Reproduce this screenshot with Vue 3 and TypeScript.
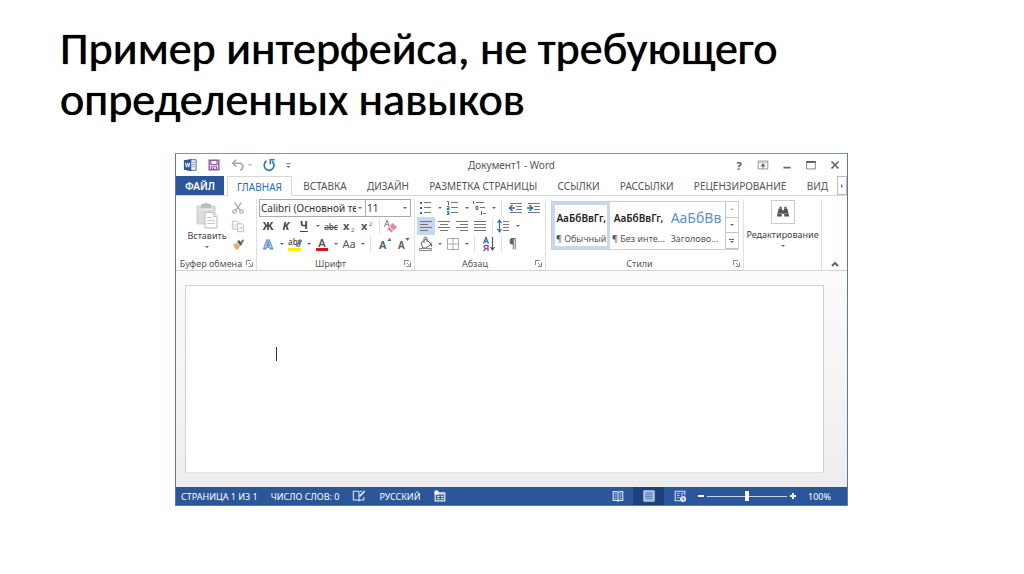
<script setup lang="ts">
import { ref } from 'vue'

interface Tool {
  kind: 'tool' | 'caret' | 'sep' | 'space'
  label?: string
  icon?: string
  active?: boolean
}

const tool = (icon: string, label: string, active = false): Tool => ({ kind: 'tool', icon, label, active })
const caret = (label: string): Tool => ({ kind: 'caret', label })
const sep: Tool = { kind: 'sep' }
const space: Tool = { kind: 'space' }

const lines = (rows: number[][], color = '#777') =>
  rows.map(([x, y, w]) => `<path d="M${x} ${y}.5h${w}" stroke="${color}"/>`).join('')

const icons: Record<string, string> = {
  word: '<path d="M8 2h7v12H8z" fill="#fff" stroke="#2b579a"/><path d="M10 5h4M10 7.5h4M10 10h4" stroke="#6f8fc0"/><path d="M1 2.5 9.500 1v14L1 13.500z" fill="#2b579a"/><path d="m2.800 5.500 1.200 5 1.300-5 1.300 5 1.200-5" fill="none" stroke="#fff" stroke-width="1.100"/>',
  save: '<path d="M2.500 2.500h11v11h-11z" fill="#fff" stroke="#8f5aa8" stroke-width="1.600"/><path d="M4.500 2.500v5h7v-5M5 13.500v-3.500h6v3.500" fill="none" stroke="#8f5aa8" stroke-width="1.400"/><path d="M6.500 11h2v2.500h-2z" fill="#8f5aa8"/>',
  undo: '<path d="M6 2 2 6l4 4M2.500 6H9.500c5 0 5.500 6 1 8" fill="none" stroke="#a9a9a9" stroke-width="1.900"/>',
  redo: '<path d="M5.500 3.500A5.600 5.600 0 1 0 11.500 4" fill="none" stroke="#3478b8" stroke-width="2"/><path d="M9.500 7V2h5" fill="none" stroke="#3478b8" stroke-width="1.900"/>',
  quick: '<path d="M6 6.500h5" stroke="#777" stroke-width="1.200"/><path d="M6 9h5l-2.500 2.500z" fill="#777"/>',
  ribbon: '<path d="M2.500 3.500h11v9h-11z" fill="none" stroke="#888"/><path d="M3 5.500h10" stroke="#aaa"/><path d="M8 12V7M5.700 9.500 8 7 10.300 9.500" fill="none" stroke="#666" stroke-width="1.300"/>',
  minimize: '<path d="M4 11h8" stroke="#666" stroke-width="2"/>',
  maximize: '<path d="M3 4.500h10v8H3z" fill="none" stroke="#777"/><path d="M2.500 4.500h11" stroke="#555" stroke-width="2"/>',
  close: '<path d="m4 4 8 8m0-8-8 8" stroke="#666" stroke-width="2"/>',
  paste: '<path d="M2 4h18v18H2z" fill="#dcdcdc" stroke="#cdcdcd"/><path d="M6 4V2h3q2-3 4 0h3v4H6z" fill="#bdbdbd"/><path d="M4 7.500h14" stroke="#eee"/><path d="M10 10.500h8l4 4V26H10z" fill="#fff" stroke="#bbb"/><path d="M18 10.500v4h4M12 15.500h5M12 18.500h8M12 21.500h8" fill="none" stroke="#c8c8c8"/>',
  cut: '<path d="M4 1.500 10.500 11M12 1.500 5.500 11" stroke="#a8a8a8" stroke-width="1.400"/><circle cx="4" cy="12" r="2" fill="none" stroke="#a8a8a8" stroke-width="1.300"/><circle cx="12" cy="12" r="2" fill="none" stroke="#a8a8a8" stroke-width="1.300"/>',
  copy: '<path d="M1.500 2.500h5l2 2v7h-7z" fill="#fff" stroke="#b5b5b5"/><path d="M7.500 5.500h5l2 2v7h-7z" fill="#fff" stroke="#b5b5b5"/><path d="M3 6.500h3M3 8.500h3M9.500 9.500H13M9.500 11.500H13" stroke="#c5c5c5"/>',
  painter: '<path d="m2 9 5-3 4 4-4 5-2-1.500z" fill="#edbd75"/><path d="m7 5 2-1.500 4 4L11 10z" fill="#555"/><path d="m11 5 2.500-2.500 1.500 1.500L13 7z" fill="#777"/><path d="m3.500 9.500 3.500 4M5.500 8.500l3 3.500" stroke="#d3944d"/>',
  bold: '<text x="8" y="12" text-anchor="middle" font-size="11" font-weight="700" fill="#444">Ж</text>',
  italic: '<text x="8" y="12" text-anchor="middle" font-size="11" font-weight="700" font-style="italic" fill="#444">К</text>',
  underline: '<text x="8" y="11" text-anchor="middle" font-size="11" font-weight="700" fill="#444">Ч</text><path d="M4 13.500h8" stroke="#444"/>',
  strike: '<text x="8" y="12" text-anchor="middle" font-size="8" font-weight="600" fill="#555">abc</text><path d="M1 9.500h14" stroke="#555"/>',
  sub: '<text x="2" y="12" font-size="11" font-weight="700" fill="#555">x</text><text x="10" y="14" font-size="6" fill="#3b6fb0">2</text>',
  sup: '<text x="2" y="12" font-size="11" font-weight="700" fill="#555">x</text><text x="10" y="8" font-size="6" fill="#3b6fb0">2</text>',
  eraser: '<text x="1" y="9" font-size="9" fill="#666">A</text><path d="m4 11 5.500-6 4.500 4-5.500 5.500z" fill="#e58a9a"/><path d="m6 8.500 5 4.500" stroke="#fff"/>',
  effects: '<text x="8" y="13" text-anchor="middle" font-size="13" font-weight="700" fill="#fff" stroke="#3c80c4" stroke-width="1">A</text>',
  marker: '<text x="1" y="9" font-size="8" font-weight="600" fill="#555">aby</text><path d="m9 9 4-6 1.500 1-4 6-2 1z" fill="#777"/><path d="M1 12h13v3H1z" fill="#fff200"/>',
  color: '<text x="8" y="11" text-anchor="middle" font-size="11" font-weight="600" fill="#555">A</text><path d="M2 12h12v3H2z" fill="#d8141c"/>',
  letterCase: '<text x="8" y="12" text-anchor="middle" font-size="11" fill="#555">Aa</text>',
  grow: '<text x="2" y="13" font-size="11" font-weight="600" fill="#555">A</text><path d="m10.500 5 2-3 2 3z" fill="#2d6fb5"/>',
  shrink: '<text x="3" y="13" font-size="10" font-weight="600" fill="#555">A</text><path d="m10.500 2 2 3 2-3z" fill="#2d6fb5"/>',
  bullets: '<path d="M2 2h2v2H2zM2 7h2v2H2zM2 12h2v2H2z" fill="#2d6fb5"/>' + lines([[6, 2, 7], [6, 7, 7], [6, 12, 7]]),
  numbers: '<path d="M2 1.500h1.500V5M2 6.500h2v2H2v1h2.500M2 11.500h2v3H2m0-1.500h2" fill="none" stroke="#2d6fb5"/>' + lines([[6, 2, 7], [6, 7, 7], [6, 12, 7]]),
  multi: '<path d="M1.500 1v3M4 6.500h2v3H4zM9.500 11v4" fill="none" stroke="#2d6fb5"/>' + lines([[4, 2, 8], [8, 7, 5], [11, 13, 3]]),
  outdent: lines([[2, 3, 12], [8, 6, 6], [8, 9, 6], [2, 12, 12]]) + '<path d="M7 8H2M4.500 5 1.500 8l3 3" fill="none" stroke="#2d6fb5" stroke-width="1.600"/>',
  indent: lines([[2, 3, 12], [8, 6, 6], [8, 9, 6], [2, 12, 12]]) + '<path d="M1 8h5M3.500 5l3 3-3 3" fill="none" stroke="#2d6fb5" stroke-width="1.600"/>',
  left: lines([[2, 3, 12], [2, 6, 8], [2, 9, 12], [2, 12, 8]]),
  center: lines([[2, 3, 12], [4, 6, 8], [2, 9, 12], [4, 12, 8]]),
  right: lines([[2, 3, 12], [6, 6, 8], [2, 9, 12], [6, 12, 8]]),
  justify: lines([[2, 3, 12], [2, 6, 12], [2, 9, 12], [2, 12, 12]]),
  spacing: '<path d="M3.500 2v12M1.500 5l2-3 2 3m-4 6 2 3 2-3" fill="none" stroke="#2d6fb5" stroke-width="1.200"/>' + lines([[7, 3, 6], [7, 6, 6], [7, 9, 6], [7, 12, 6]]),
  bucket: '<path d="m3 7 5-4 5 5-5 4H5z" fill="#fff" stroke="#666"/><path d="M6 7V2q2-2 3 0v4" fill="none" stroke="#666"/><path d="M12 6q3 2 2 5-2-1-2-5" fill="#2d6fb5"/><path d="M1.500 12.500h12v2h-12z" fill="#fff" stroke="#888"/>',
  borders: '<path d="M2.500 2.500h11v11h-11zM8 2.500v11M2.500 8h11" fill="none" stroke="#aaa"/>',
  sort: '<path d="M2.500 7.500 5 1.500l2.500 6M3.500 5.500h3" fill="none" stroke="#2d6fb5" stroke-width="1.300"/><path d="M7 15V9.500H5q-2 0-2 1.500t2 1.500h2M5 12.500 2.500 15" fill="none" stroke="#8f4aa0" stroke-width="1.300"/><path d="M11.500 1v13M9.500 11l2 3 2-3" fill="none" stroke="#555" stroke-width="1.200"/>',
  pilcrow: '<text x="8" y="12" text-anchor="middle" font-size="12" font-weight="600" fill="#666">¶</text>',
  find: '<path d="M3 4h4v2h2V4h4l2 9H9.500v-3h-3v3H1z" fill="#555"/><path d="M4 2h2.500v2H4zM9.500 2H12v2H9.500z" fill="#555"/><path d="M3 9.500h3M10 9.500h3" stroke="#aaa"/>',
  launcher: '<path d="M2.500 7V2.500H7M5 5l2.500 2.500M8.500 4.500v4h-4" fill="none" stroke="#888"/>',
  proof: '<path d="M1.500 2.500h5l1.500 1 1.500-1h2M1.500 2.500v10h5l1.500 1 1.500-1h4V9M8 3.500v10" fill="none" stroke="#dce6f4" stroke-width="1.200"/><path d="m8.500 8.500 6-6" stroke="#dce6f4" stroke-width="2"/>',
  macro: '<path d="M2.500 5.500h11v8h-11z" fill="none" stroke="#e6edf7" stroke-width="1.300"/><path d="M3 4.500h11M4.500 8.500h3M9 8.500h3M4.500 11h3M9 11h3" stroke="#e6edf7" stroke-width="1.400"/><circle cx="4" cy="4" r="2.600" fill="#fff"/>',
  read: '<path d="M2.500 3h4L8 4l1.500-1h4v10h-4L8 14l-1.500-1h-4zM8 4v9.500" fill="none" stroke="#dce6f4" stroke-width="1.200"/><path d="M4 5.500h2.500M4 8h2.500M4 10.500h2.500M9.500 5.500H12M9.500 8H12M9.500 10.500H12" stroke="#dce6f4"/>',
  print: '<path d="M2 2h12v12H2z" fill="#9fb6d9" stroke="#c7d5ea"/><path d="M4 4.500h8M4 6.500h8M4 8.500h8M4 10.500h8" stroke="#5c7fb5"/>',
  web: '<path d="M13.500 7V2.500h-11v11h6" fill="none" stroke="#dce6f4" stroke-width="1.200"/><path d="M4.500 5h3M4.500 7.500h3M4.500 10h3M9 5h3M9 7h2" stroke="#dce6f4"/><circle cx="11.500" cy="11.500" r="3.500" fill="#dce6f4"/><path d="m10 10 2 1v2" fill="none" stroke="#2b579a"/>',
}

const tabs = ['ГЛАВНАЯ', 'ВСТАВКА', 'ДИЗАЙН', 'РАЗМЕТКА СТРАНИЦЫ', 'ССЫЛКИ', 'РАССЫЛКИ', 'РЕЦЕНЗИРОВАНИЕ', 'ВИД']
const activeTab = ref('ГЛАВНАЯ')

const fontRows: Tool[][] = [
  [
    tool('bold', 'Полужирный'), tool('italic', 'Курсив'), tool('underline', 'Подчеркнутый'), caret('Вид подчеркивания'),
    tool('strike', 'Зачеркнутый'), tool('sub', 'Подстрочный'), tool('sup', 'Надстрочный'), sep, tool('eraser', 'Очистить формат'),
  ],
  [
    tool('effects', 'Эффекты'), caret('Виды эффектов'), tool('marker', 'Выделение'), caret('Цвет выделения'),
    tool('color', 'Цвет шрифта'), caret('Выбор цвета'), tool('letterCase', 'Регистр'), caret('Выбор регистра'), sep,
    space, tool('grow', 'Увеличить размер'), tool('shrink', 'Уменьшить размер'),
  ],
]

const paragraphRows: Tool[][] = [
  [
    tool('bullets', 'Маркеры'), caret('Вид маркеров'), tool('numbers', 'Нумерация'), caret('Вид нумерации'),
    tool('multi', 'Многоуровневый список'), caret('Вид списка'), sep, space, tool('outdent', 'Уменьшить отступ'), tool('indent', 'Увеличить отступ'),
  ],
  [
    tool('left', 'По левому краю', true), tool('center', 'По центру'), tool('right', 'По правому краю'), tool('justify', 'По ширине'),
    sep, tool('spacing', 'Интервал'), caret('Выбор интервала'),
  ],
  [
    tool('bucket', 'Заливка'), caret('Цвет заливки'), tool('borders', 'Границы'), caret('Вид границ'),
    sep, space, tool('sort', 'Сортировка'), sep, tool('pilcrow', 'Отобразить все знаки'),
  ],
]

const styles = [
  { sample: 'АаБбВвГг,', name: '¶ Обычный', heading: false },
  { sample: 'АаБбВвГг,', name: '¶ Без инте...', heading: false },
  { sample: 'АаБбВв', name: 'Заголово...', heading: true },
]
const activeStyle = ref(0)
const fontName = ref('Calibri (Основной текст)')
const fontSize = ref('11')
const zoom = ref(50)
</script>

<template>
  <main class="slide">
    <h1>Пример интерфейса, не требующего<br>определенных навыков</h1>

    <section class="window" aria-label="Документ1 - Word">
      <header class="titlebar">
        <div class="quick">
          <button aria-label="Word"><svg class="ic" viewBox="0 0 16 16" v-html="icons.word" /></button>
          <button aria-label="Сохранить"><svg class="ic" viewBox="0 0 16 16" v-html="icons.save" /></button>
          <div class="pair">
            <button aria-label="Отменить"><svg class="ic" viewBox="0 0 16 16" v-html="icons.undo" /></button>
            <button class="caret pale" aria-label="История отмены"><i /></button>
          </div>
          <button aria-label="Повторить"><svg class="ic" viewBox="0 0 16 16" v-html="icons.redo" /></button>
          <button aria-label="Настройка панели"><svg class="ic" viewBox="0 0 16 16" v-html="icons.quick" /></button>
        </div>
        <span class="caption">Документ1 - Word</span>
        <div class="controls">
          <button class="help" aria-label="Справка">?</button>
          <button aria-label="Параметры ленты"><svg class="ic" viewBox="0 0 16 16" v-html="icons.ribbon" /></button>
          <button aria-label="Свернуть"><svg class="ic" viewBox="0 0 16 16" v-html="icons.minimize" /></button>
          <button aria-label="Развернуть"><svg class="ic" viewBox="0 0 16 16" v-html="icons.maximize" /></button>
          <button aria-label="Закрыть"><svg class="ic" viewBox="0 0 16 16" v-html="icons.close" /></button>
        </div>
      </header>

      <nav class="tabs">
        <button class="file">ФАЙЛ</button>
        <div class="tablist">
          <button
            v-for="t in tabs" :key="t" class="tab" :class="{ current: t === activeTab }"
            @click="activeTab = t"
          >{{ t }}</button>
        </div>
        <button class="more" aria-label="Другие вкладки"><i /></button>
      </nav>

      <div class="ribbon">
        <section class="group">
          <div class="body clipboard">
            <button class="paste">
              <svg class="big" viewBox="0 0 24 27" v-html="icons.paste" />
              <span>Вставить</span>
              <i class="arrow" />
            </button>
            <div class="stack">
              <button class="tool" aria-label="Вырезать"><svg class="ic" viewBox="0 0 16 16" v-html="icons.cut" /></button>
              <button class="tool" aria-label="Копировать"><svg class="ic" viewBox="0 0 16 16" v-html="icons.copy" /></button>
              <button class="tool" aria-label="Формат по образцу"><svg class="ic" viewBox="0 0 16 16" v-html="icons.painter" /></button>
            </div>
          </div>
          <footer><span>Буфер обмена</span><button aria-label="Буфер обмена: параметры"><svg viewBox="0 0 10 10" v-html="icons.launcher" /></button></footer>
        </section>

        <section class="group">
          <div class="body rows">
            <div class="fields">
              <label class="field name">
                <select v-model="fontName" aria-label="Шрифт"><option>Calibri (Основной текст)</option></select>
                <i class="arrow" />
              </label>
              <label class="field size">
                <select v-model="fontSize" aria-label="Размер шрифта"><option>11</option><option>12</option></select>
                <i class="arrow" />
              </label>
            </div>
            <div v-for="(row, r) in fontRows" :key="r" class="row">
              <template v-for="(item, i) in row" :key="i">
                <button v-if="item.kind === 'tool'" class="tool" :aria-label="item.label">
                  <svg class="ic" viewBox="0 0 16 16" v-html="icons[item.icon!]" />
                </button>
                <button v-else-if="item.kind === 'caret'" class="caret" :aria-label="item.label"><i /></button>
                <span v-else :class="item.kind" />
              </template>
            </div>
          </div>
          <footer><span>Шрифт</span><button aria-label="Шрифт: параметры"><svg viewBox="0 0 10 10" v-html="icons.launcher" /></button></footer>
        </section>

        <section class="group">
          <div class="body rows">
            <div v-for="(row, r) in paragraphRows" :key="r" class="row">
              <template v-for="(item, i) in row" :key="i">
                <button v-if="item.kind === 'tool'" class="tool" :class="{ pressed: item.active }" :aria-label="item.label">
                  <svg class="ic" viewBox="0 0 16 16" v-html="icons[item.icon!]" />
                </button>
                <button v-else-if="item.kind === 'caret'" class="caret" :aria-label="item.label"><i /></button>
                <span v-else :class="item.kind" />
              </template>
            </div>
          </div>
          <footer><span>Абзац</span><button aria-label="Абзац: параметры"><svg viewBox="0 0 10 10" v-html="icons.launcher" /></button></footer>
        </section>

        <section class="group">
          <div class="body gallery-wrap">
            <div class="gallery">
              <button
                v-for="(s, i) in styles" :key="i" class="card" :class="{ chosen: i === activeStyle, heading: s.heading }"
                @click="activeStyle = i"
              >
                <span class="sample">{{ s.sample }}</span>
                <span class="label">{{ s.name }}</span>
              </button>
              <div class="scroller">
                <button class="up" aria-label="Вверх"><i class="arrow" /></button>
                <button aria-label="Вниз"><i class="arrow" /></button>
                <button class="all" aria-label="Все стили"><i class="arrow" /></button>
              </div>
            </div>
          </div>
          <footer><span>Стили</span><button aria-label="Стили: параметры"><svg viewBox="0 0 10 10" v-html="icons.launcher" /></button></footer>
        </section>

        <section class="group">
          <button class="body editing">
            <span class="find"><svg class="ic" viewBox="0 0 16 16" v-html="icons.find" /></span>
            <span>Редактирование</span>
            <i class="arrow" />
          </button>
        </section>

        <div class="collapse">
          <button aria-label="Свернуть ленту">
            <svg viewBox="0 0 10 10"><path d="m2 7 3-3 3 3" fill="none" stroke="#666" stroke-width="2" /></svg>
          </button>
        </div>
      </div>

      <div class="workspace">
        <div class="page"><span class="cursor" /></div>
      </div>

      <footer class="status">
        <button>СТРАНИЦА 1 ИЗ 1</button>
        <button>ЧИСЛО СЛОВ: 0</button>
        <button aria-label="Правописание"><svg class="ic" viewBox="0 0 16 16" v-html="icons.proof" /></button>
        <button>РУССКИЙ</button>
        <button aria-label="Запись макроса"><svg class="ic" viewBox="0 0 16 16" v-html="icons.macro" /></button>
        <div class="views">
          <button class="view" aria-label="Режим чтения"><svg class="ic" viewBox="0 0 16 16" v-html="icons.read" /></button>
          <button class="view on" aria-label="Разметка страницы"><svg class="ic" viewBox="0 0 16 16" v-html="icons.print" /></button>
          <button class="view" aria-label="Веб-документ"><svg class="ic" viewBox="0 0 16 16" v-html="icons.web" /></button>
          <button class="step" aria-label="Уменьшить"><svg viewBox="0 0 10 10"><path d="M2 5h6" stroke="#fff" stroke-width="2" /></svg></button>
          <input v-model="zoom" type="range" min="0" max="100" aria-label="Масштаб">
          <button class="step" aria-label="Увеличить"><svg viewBox="0 0 10 10"><path d="M2 5h6M5 2v6" stroke="#fff" stroke-width="2" /></svg></button>
          <button class="percent">100%</button>
        </div>
      </footer>
    </section>
  </main>
</template>

<style>
body {
  background: #fff;
}
</style>

<style scoped>
* {
  box-sizing: border-box;
}

.slide {
  padding: 23px 176px 24px 175px;
  font-family: "Noto Sans", "Open Sans", sans-serif;
  font-size: 9px;
  color: #555;
}

h1 {
  margin: 0 -100px 28px -115px;
  font: 400 46px/51px Carlito, Calibri, "Noto Sans", sans-serif;
  color: #000;
  white-space: nowrap;
  text-shadow: 0 0 1px #000;
}

button {
  display: flex;
  align-items: center;
  justify-content: center;
  margin: 0;
  padding: 0;
  border: 0;
  background: none;
  font: inherit;
  color: inherit;
  white-space: nowrap;
}

svg {
  display: block;
  flex: none;
  width: 10px;
  height: 10px;
}

.ic {
  width: 14px;
  height: 14px;
}

.window {
  border: 1px solid #5a78ae;
  border-top-color: #7f92b5;
  background: #fff;
}

.titlebar {
  display: grid;
  grid-template-columns: 1fr auto 1fr;
  align-items: center;
  height: 22px;
}

.quick {
  display: flex;
  gap: 10px;
  padding-left: 7px;
}

.pair {
  display: flex;
}

.pair + button {
  margin-left: -2px;
}

.quick > :last-child {
  margin-left: -5px;
}

.caption {
  font-size: 10px;
}

.controls {
  display: flex;
  justify-content: flex-end;
  gap: 10px;
  padding-right: 5px;
}

.help {
  width: 14px;
  font-size: 11px;
  font-weight: 700;
}

.tabs {
  display: flex;
  height: 20px;
  border-bottom: 1px solid #d8d8d8;
  font-size: 10px;
}

.file {
  width: 48px;
  background: #2b579a;
  color: #fff;
  font-weight: 600;
}

.tablist {
  display: flex;
  flex: 1;
  justify-content: space-between;
  margin-left: 3px;
}

.tab {
  padding: 0 9px;
}

.current {
  margin-bottom: -1px;
  border: 1px solid #d8d8d8;
  border-bottom: 0;
  background: #fff;
  color: #2b6cb0;
}

.more {
  width: 10px;
  border: 1px solid #bbb;
}

.more i {
  border: 2px solid transparent;
  border-left-color: #666;
  border-right: 0;
}

.ribbon {
  display: grid;
  grid-template-columns: 81px 158px 131px 1fr 78px 25px;
  height: 75px;
  padding: 3px 0 1px;
  border-bottom: 1px solid #d2d2d2;
}

.group {
  display: flex;
  flex-direction: column;
  border-right: 1px solid #e0e0e0;
}

.body {
  display: flex;
  height: 57px;
}

.group footer {
  display: flex;
  align-items: center;
  height: 14px;
  padding: 0 2px;
}

.group footer span {
  flex: 1;
  text-align: center;
  white-space: nowrap;
}

.clipboard {
  justify-content: space-between;
  padding: 0 9px;
}

.paste {
  flex-direction: column;
  justify-content: flex-start;
  width: 44px;
  padding-top: 3px;
  color: #444;
}

.paste .arrow {
  margin-top: 4px;
}

.big {
  width: 24px;
  height: 27px;
}

.arrow,
.caret i {
  flex: none;
  border: 2px solid transparent;
  border-top-color: #666;
  border-bottom: 0;
}

.pale {
  opacity: 0.5;
}

.rows {
  flex-direction: column;
  padding-left: 2px;
}

.row {
  display: flex;
  height: 18px;
}

.tool {
  width: 18px;
  height: 18px;
}

.row .ic {
  width: 16px;
  height: 16px;
}

.pressed {
  background: #c5d7f2;
}

.caret {
  width: 9px;
}

.sep {
  width: 1px;
  height: 16px;
  margin: 1px 2px 1px 3px;
  background: #e2e2e2;
}

.space {
  width: 3px;
}

.fields {
  display: flex;
  width: 152px;
  height: 18px;
}

.field {
  display: flex;
  align-items: center;
  border: 1px solid #ababab;
  padding-right: 3px;
}

.name {
  flex: 1;
  min-width: 0;
}

.size {
  width: 46px;
  margin-left: -1px;
}

.field select {
  flex: 1;
  min-width: 0;
  margin-right: 2px;
  padding: 0 0 0 1px;
  appearance: none;
  border: 0;
  background: none;
  font: inherit;
  font-size: 10px;
  color: #333;
}

.gallery-wrap {
  padding: 2px 4px 5px 5px;
}

.gallery {
  display: flex;
  flex: 1;
  min-width: 0;
  height: 49px;
  border: 1px solid #d0d0d0;
}

.card {
  flex: 1;
  flex-direction: column;
  justify-content: space-between;
  min-width: 0;
  overflow: hidden;
  padding: 8px 2px 3px;
}

.chosen {
  padding: 5px 0 0;
  border: 3px solid #c5d7f2;
}

.sample {
  line-height: 16px;
  font-size: 10px;
  font-weight: 600;
  color: #222;
}

.label {
  line-height: 14px;
}

.heading {
  align-items: flex-start;
  padding-left: 4px;
}

.heading .sample {
  font-size: 14px;
  font-weight: 400;
  color: #5b92c4;
}

.scroller {
  display: grid;
  flex: none;
  grid-template-rows: 1fr 1fr 1fr;
  width: 13px;
}

.scroller button {
  border: 1px solid #c4c4c4;
  border-width: 0 0 1px 1px;
}

.scroller .all {
  flex-direction: column;
  gap: 1px;
}

.all::before {
  content: "";
  width: 5px;
  height: 1px;
  background: #666;
}

.up .arrow {
  transform: rotate(180deg);
  opacity: 0.5;
}

.editing {
  flex-direction: column;
  justify-content: flex-start;
  gap: 4px;
  color: #444;
}

.find {
  display: grid;
  place-items: center;
  width: 24px;
  height: 24px;
  margin-top: 1px;
  border: 1px solid #ccc;
}

.collapse {
  display: flex;
  align-items: flex-end;
  justify-content: center;
  padding-bottom: 1px;
}

.workspace {
  padding: 14px 23px 14px 9px;
  background: linear-gradient(#fcfcfc, #ededed);
}

.page {
  height: 188px;
  padding: 61px 90px;
  border: 1px solid #d0d0d0;
  border-bottom-color: #e4e4e4;
  background: #fff;
}

.cursor {
  display: block;
  width: 1px;
  height: 14px;
  background: #333;
}

.status {
  display: flex;
  align-items: center;
  gap: 13px;
  height: 18px;
  padding: 0 16px 0 5px;
  background: #2b579a;
  color: #fff;
}

.views {
  display: flex;
  align-items: center;
  margin-left: auto;
}

.view {
  width: 31px;
  height: 18px;
}

.on {
  background: #1c427d;
}

.step {
  width: 12px;
}

.percent {
  margin-left: 9px;
}

input[type="range"] {
  width: 80px;
  height: 10px;
  margin: 0;
  appearance: none;
  background: linear-gradient(#c8d5e9, #c8d5e9) center / 100% 1px no-repeat;
}

input[type="range"]::-webkit-slider-thumb {
  appearance: none;
  width: 4px;
  height: 10px;
  background: #fff;
}
</style>
